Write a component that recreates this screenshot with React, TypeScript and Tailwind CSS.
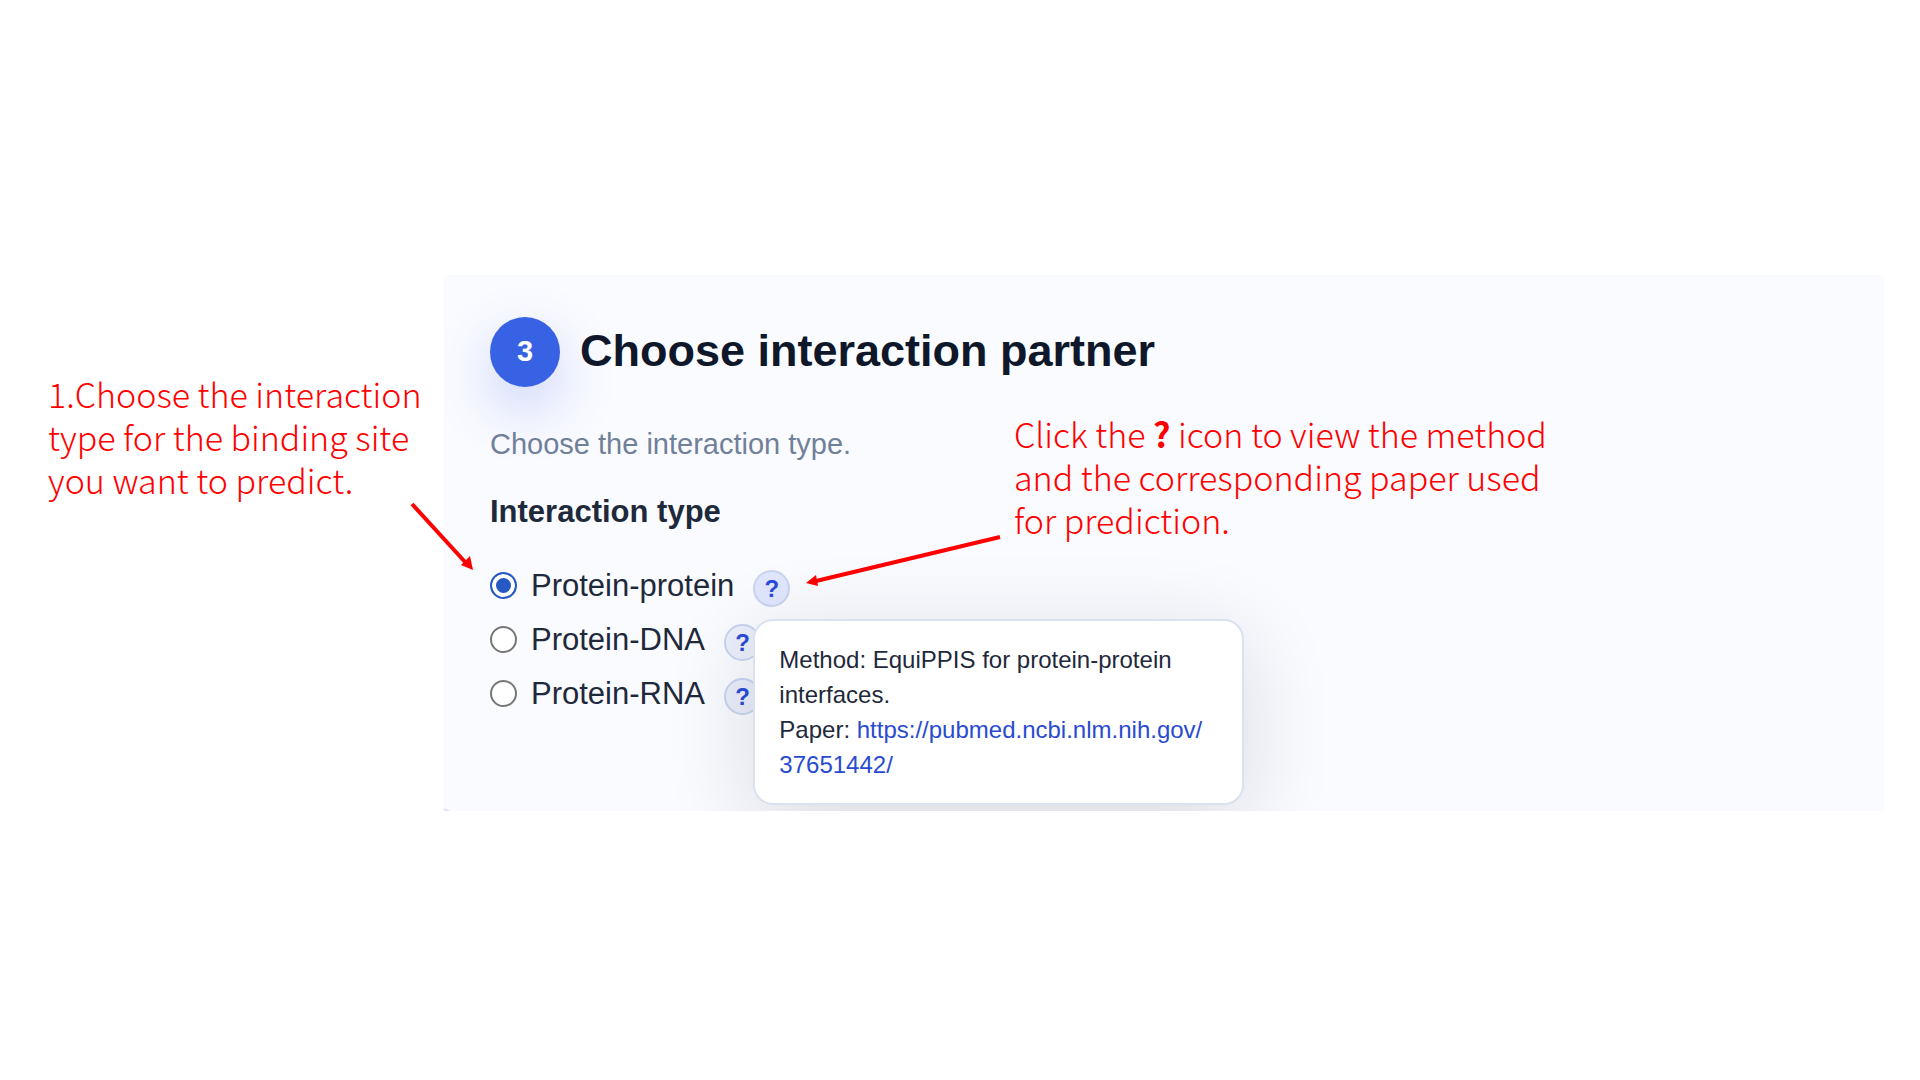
import { useState } from "react";

const interactionTypes = [
  {
    id: "protein",
    label: "Protein-protein",
    method: "EquiPPIS for protein-protein interfaces.",
    paper: ["https://pubmed.ncbi.nlm.nih.gov/", "37651442/"],
  },
  { id: "dna", label: "Protein-DNA" },
  { id: "rna", label: "Protein-RNA" },
];

function MethodTooltip({ method, paper }: { method: string; paper: string[] }) {
  return (
    <div
      role="tooltip"
      className="absolute left-0 top-[49px] z-10 w-[491px] rounded-[20px] border-2 border-[#dae1ef] bg-white px-6 py-[21px] text-[24px] leading-[35px] text-[#1e293b] shadow-[0_20px_90px_rgba(15,23,42,0.14)]"
    >
      <p>Method: {method}</p>
      <p>
        Paper:{" "}
        <a href={paper.join("")} className="text-[#2a4bd0]">
          {paper[0]}
          <wbr />
          {paper[1]}
        </a>
      </p>
    </div>
  );
}

function StepHeading({ step, title }: { step: number; title: string }) {
  return (
    <div className="flex items-center gap-5">
      <span className="flex size-[70px] shrink-0 items-center justify-center rounded-full bg-[#3762e3] text-[29px] font-bold text-white shadow-[0_22px_56px_rgba(55,82,227,0.25)]">
        {step}
      </span>
      <h1 className="pb-[2px] text-[45px] font-bold leading-[52px] text-[#0f172a]">{title}</h1>
    </div>
  );
}

export default function App() {
  const [selected, setSelected] = useState("protein");
  const [openTip, setOpenTip] = useState("protein");

  return (
    <div className="min-h-screen bg-white pt-[275px] font-['Liberation_Sans',Arial,sans-serif]">
      <main className="flex pr-9">
        <aside className="relative w-[444px] shrink-0 pl-12 pt-[97px] font-['Noto_Sans_CJK_SC',sans-serif] text-[34px] font-light leading-[43px] text-[#ff0000]">
          <p>
            1.Choose the interaction
            <br />
            type for the binding site
            <br />
            you want to predict.
          </p>
          <svg className="absolute left-[408px] top-[224px] z-10 h-[74px] w-[70px]" viewBox="0 0 70 74" aria-hidden="true">
            <path d="M4 5L58 64" stroke="#ff0000" strokeWidth="4" />
            <path d="M65 71L53 66L62 57Z" fill="#ff0000" />
          </svg>
        </aside>

        <section className="relative min-w-0 flex-1 overflow-hidden bg-[#fafbff] px-[46px] pb-24 pt-[42px]">
          <StepHeading step={3} title="Choose interaction partner" />
          <p className="mt-[39px] text-[29px] leading-9 text-[#718099]">Choose the interaction type.</p>

          <fieldset>
            <legend className="pt-[30px] text-[31px] font-bold leading-10 text-[#1e293b]">Interaction type</legend>
            <div className="mt-[38px] flex flex-col gap-[17px]">
              {interactionTypes.map((type) => (
                <div key={type.id} className="relative flex h-[37px] items-center gap-[19px]">
                  <label className="flex items-center gap-[14px] pb-[6px] text-[31px] leading-9 text-[#1e293b]">
                    <input
                      type="radio"
                      name="interaction"
                      value={type.id}
                      checked={selected === type.id}
                      onChange={() => setSelected(type.id)}
                      className="size-[27px] appearance-none rounded-full border-2 border-[#767676] bg-white checked:border-[#2759c4] checked:bg-[#2759c4] checked:shadow-[inset_0_0_0_4px_#fff]"
                    />
                    {type.label}
                  </label>
                  <div className="relative">
                    <button
                      type="button"
                      aria-label={`About ${type.label}`}
                      aria-expanded={openTip === type.id}
                      onClick={() => setOpenTip(type.id)}
                      className="flex size-[37px] items-center justify-center rounded-full border-2 border-[#c9d4f1] bg-[#eaeffa] text-[24px] font-bold leading-none text-[#2a4bd8] aria-expanded:bg-[#dfe6fd]"
                    >
                      ?
                    </button>
                    {openTip === type.id && type.method && (
                      <MethodTooltip method={type.method} paper={type.paper} />
                    )}
                  </div>
                </div>
              ))}
            </div>
          </fieldset>

          <div className="absolute left-[570px] top-[137px] font-['Noto_Sans_CJK_SC',sans-serif] text-[34px] font-light leading-[43px] text-[#ff0000]">
            <p>
              Click the <b className="font-bold">?</b> icon to view the method
              <br />
              and the corresponding paper used
              <br />
              for prediction.
            </p>
          </div>
          <svg className="absolute left-[356px] top-[256px] h-[60px] w-[204px]" viewBox="0 0 204 60" aria-hidden="true">
            <path d="M200 6L16 50" stroke="#ff0000" strokeWidth="4" />
            <path d="M6 52L16 44L18 55Z" fill="#ff0000" />
          </svg>
          <svg className="absolute bottom-0 left-0 h-[3px] w-[7px]" viewBox="0 0 7 3" aria-hidden="true">
            <path d="M0 0Q3 2 7 3H0Z" fill="#dfe3f8" />
          </svg>
        </section>
      </main>
    </div>
  );
}
